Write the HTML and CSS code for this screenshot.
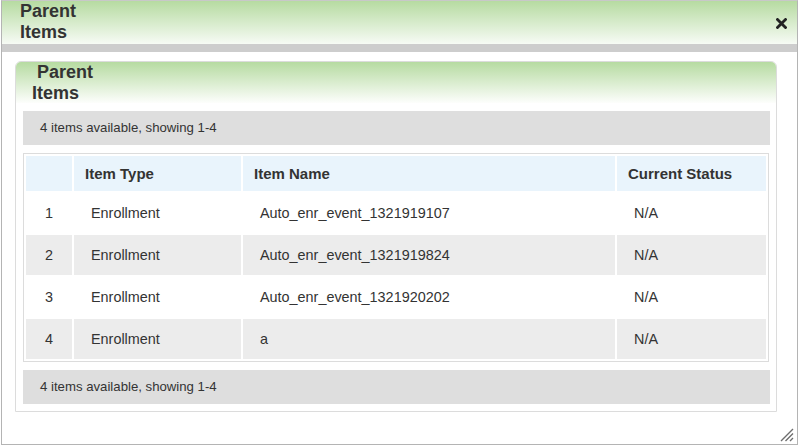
FILE: index.html
```html
<!DOCTYPE html>
<html lang="en">
<head>
  <meta charset="UTF-8">
  <meta name="viewport" content="width=device-width, initial-scale=1.0">
  <title>Parent Items</title>
  <link rel="stylesheet" href="styles.css">
</head>
<body>
  <div class="dialog">
    <div class="titlebar">
      <span class="title">Parent<br>Items</span>
      <span class="close" title="Close">
        <svg width="11" height="11" viewBox="0 0 11 11">
          <path d="M1.5 1.5 L9.5 9.5 M9.5 1.5 L1.5 9.5" stroke="#222" stroke-width="2.8" stroke-linecap="square"/>
        </svg>
      </span>
    </div>
    <div class="divider"></div>
    <div class="content">
      <div class="panel">
        <div class="panel-head">Parent<br>Items</div>
        <div class="panel-body">
          <div class="pager">4 items available, showing 1-4</div>
          <table class="items">
            <colgroup>
              <col class="col-num">
              <col class="col-type">
              <col class="col-name">
              <col class="col-status">
            </colgroup>
            <thead>
              <tr>
                <th></th>
                <th>Item Type</th>
                <th>Item Name</th>
                <th>Current Status</th>
              </tr>
            </thead>
            <tbody>
              <tr>
                <td class="num">1</td>
                <td>Enrollment</td>
                <td>Auto_enr_event_1321919107</td>
                <td>N/A</td>
              </tr>
              <tr class="alt">
                <td class="num">2</td>
                <td>Enrollment</td>
                <td>Auto_enr_event_1321919824</td>
                <td>N/A</td>
              </tr>
              <tr>
                <td class="num">3</td>
                <td>Enrollment</td>
                <td>Auto_enr_event_1321920202</td>
                <td>N/A</td>
              </tr>
              <tr class="alt">
                <td class="num">4</td>
                <td>Enrollment</td>
                <td>a</td>
                <td>N/A</td>
              </tr>
            </tbody>
          </table>
          <div class="pager pager-bottom">4 items available, showing 1-4</div>
        </div>
      </div>
    </div>
    <span class="grip">
      <svg width="15" height="15" viewBox="0 0 15 15">
        <path d="M14 2 L2 14 M14 6.5 L6.5 14 M14 11 L11 14" stroke="#6e6e6e" stroke-width="1.4"/>
      </svg>
    </span>
  </div>
</body>
</html>
```

FILE: styles.css
```css
html, body {
  margin: 0;
  padding: 0;
  background: #fff;
  font-family: "Liberation Sans", Arial, sans-serif;
  color: #333;
}
.dialog {
  position: relative;
  width: 795px;
  height: 443px;
  margin-left: 1px;
  border: 1px solid #b4b4b4;
  border-top-color: #c8c8c8;
  background: #fff;
  overflow: hidden;
}
.titlebar {
  display: flex;
  justify-content: space-between;
  align-items: center;
  height: 43px;
  padding: 0 10px 0 18px;
  background: linear-gradient(to bottom, #b6dba1, #f7fbf5);
}
.title {
  font-size: 18px;
  font-weight: bold;
  line-height: 21px;
  color: #333;
  margin-top: -1px;
}
.close {
  display: flex;
  margin-top: 2px;
  cursor: pointer;
}
.divider {
  height: 8px;
  background: #cdcdcd;
}
.content {
  padding: 9px 20px 0 13px;
}
.panel {
  border: 1px solid #dcdcdc;
  border-radius: 6px 6px 0 0;
}
.panel-head {
  height: 41px;
  padding-left: 16px;
  text-indent: 5px;
  font-size: 18px;
  font-weight: bold;
  line-height: 21px;
  color: #333;
  border-radius: 5px 5px 0 0;
  background: linear-gradient(to bottom, #b6dba1, #fdfefc);
}
.panel-body {
  padding: 8px 6px 7px 7px;
}
.pager {
  height: 34px;
  line-height: 34px;
  padding-left: 17px;
  font-size: 13.2px;
  color: #333;
  background: #dedede;
}
.pager-bottom {
  margin-top: 8px;
}
.items {
  width: 746px;
  margin-top: 8px;
  table-layout: fixed;
  border: 1px solid #dcdcdc;
  border-spacing: 2px;
  font-size: 14.4px;
}
.col-num { width: 46px; }
.col-type { width: 167px; }
.col-name { width: 372px; }
.col-status { width: 149px; }
.items th {
  height: 35px;
  padding: 0 0 0 11px;
  text-align: left;
  font-size: 15px;
  font-weight: bold;
  color: #333;
  background: #e9f4fc;
}
.items td {
  height: 40px;
  padding: 0 0 0 17px;
  color: #333;
}
.items td.num {
  padding: 0;
  text-align: center;
}
.items tr.alt td {
  background: #ececec;
}
.grip {
  position: absolute;
  right: 3px;
  bottom: 2px;
  display: flex;
}
```
